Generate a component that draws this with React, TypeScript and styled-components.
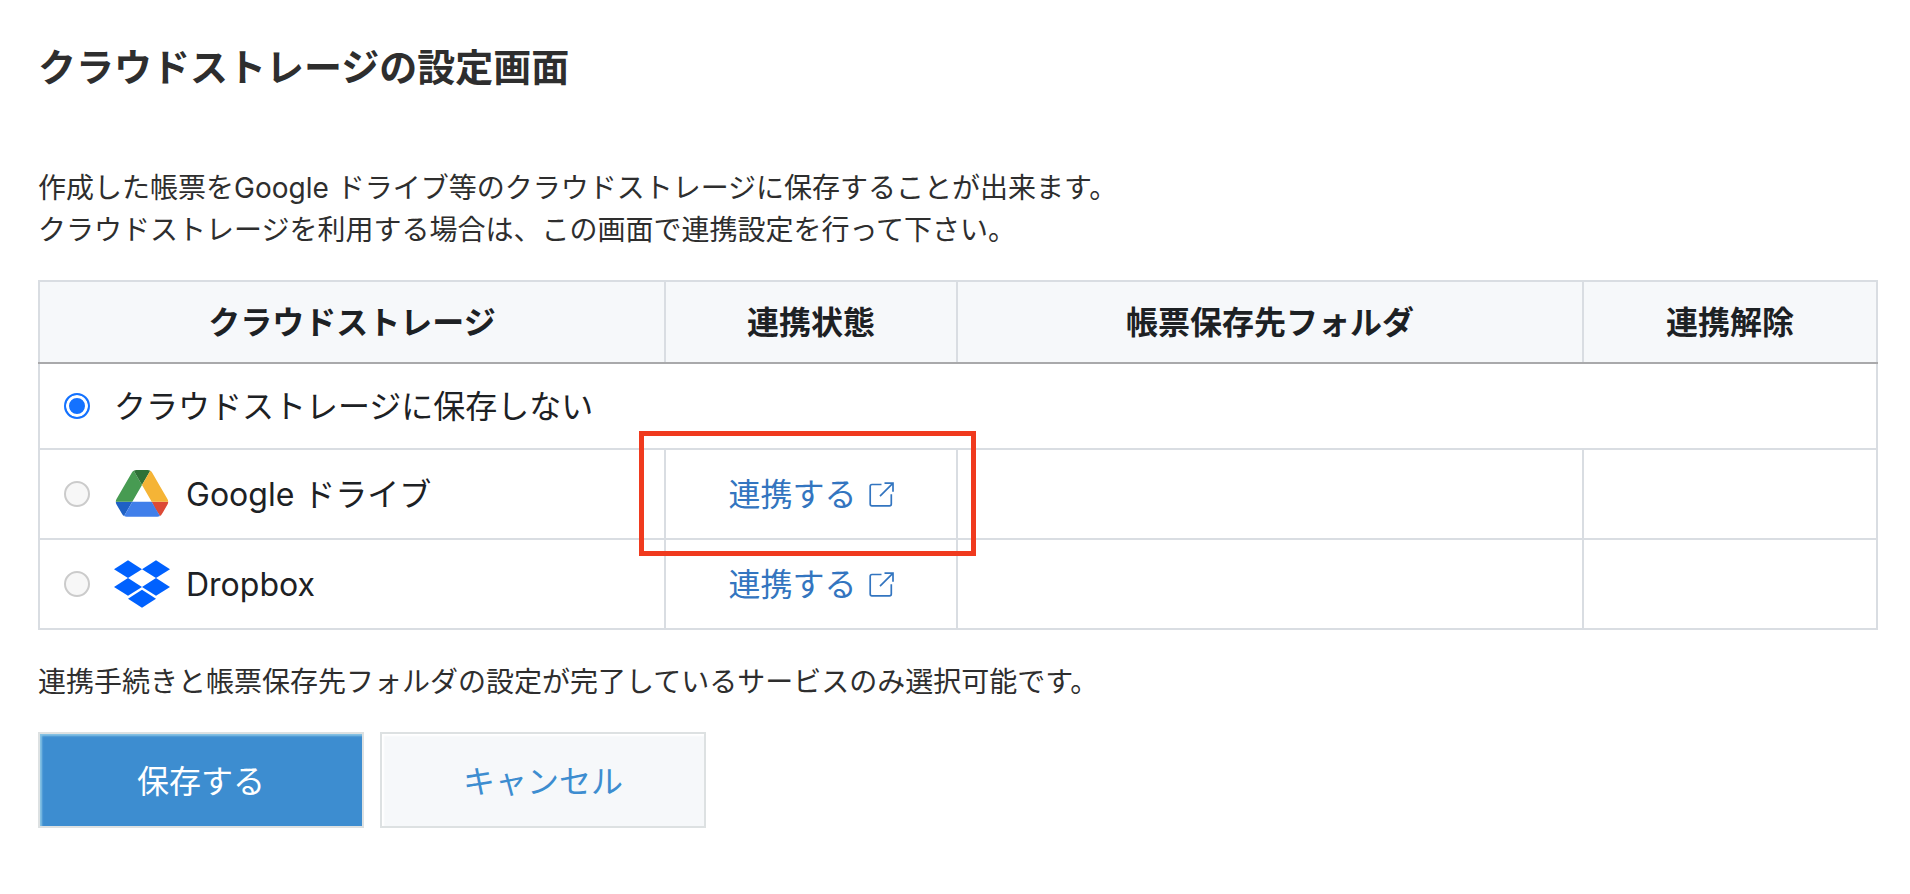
import React from "react";
import styled, { createGlobalStyle } from "styled-components";

const line = "#d9dde2";

const GlobalStyle = createGlobalStyle`
  *, *::before, *::after { box-sizing: border-box; }
  body {
    margin: 0;
    background: #fff;
    color: #2e2e2e;
    font-family: "Noto Sans", "Noto Sans CJK JP", sans-serif;
    font-size: 28px;
    line-height: 42px;
  }
`;

const Page = styled.main`
  padding: 38px 32px 38px 38px;
`;

const Title = styled.h1`
  margin: 0 0 72px;
  font-size: 38px;
  line-height: 56px;
  font-weight: 700;
`;

const Paragraph = styled.p`
  margin: 0;
`;

const Brand = styled.span`
  font-family: Inter, "Noto Sans CJK JP", sans-serif;
  line-height: 1;
  white-space: pre;
`;

const Table = styled.table`
  width: 100%;
  margin: 30px 0;
  table-layout: fixed;
  border-collapse: collapse;
  border: 2px solid ${line};
  color: #1d2124;
  font-size: 32px;
  line-height: 48px;
`;

const Column = styled.col<{ $width?: string }>`
  width: ${(p) => p.$width ?? "auto"};
`;

const HeadCell = styled.th`
  height: 82px;
  padding: 0;
  background: #f6f8fa;
  border-right: 2px solid ${line};
  border-bottom: 2px solid #a9a9ab;
  font-weight: 700;
`;

const Row = styled.tr<{ $height: number }>`
  height: ${(p) => p.$height}px;
`;

const Cell = styled.td`
  position: relative;
  padding: 0 24px;
  border: 2px solid ${line};
  text-align: center;
`;

const Choice = styled.label`
  display: flex;
  align-items: center;
  gap: 24px;
`;

const Service = styled.span`
  display: flex;
  align-items: center;
  gap: 16px;
`;

const Radio = styled.input.attrs({ type: "radio" })`
  appearance: none;
  flex: none;
  width: 26px;
  height: 26px;
  margin: 0;
  border: 2px solid #cbcbcb;
  border-radius: 50%;
  background: #f7f7f7;

  &:checked {
    border-color: #1472ff;
    background: #1472ff;
    box-shadow: inset 0 0 0 3px #fff;
  }
`;

const ConnectLink = styled.a`
  display: inline-flex;
  align-items: center;
  gap: 12px;
  color: #3375c0;
  text-decoration: none;
`;

const Highlight = styled.span`
  position: absolute;
  inset: -19px -20px -18px -27px;
  z-index: 1;
  border: 5px solid #f03a1e;
  pointer-events: none;
`;

const Actions = styled.div`
  display: flex;
  gap: 16px;
  margin-top: 30px;
`;

const Button = styled.button<{ $primary?: boolean }>`
  width: 326px;
  height: 96px;
  padding: 2px 0 0;
  border: 2px solid #dde1e2;
  background: ${(p) => (p.$primary ? "#3d8dd0" : "#f6f8fa")};
  color: ${(p) => (p.$primary ? "#fff" : "#3d8dd0")};
  box-shadow: inset 2px 2px 2px ${(p) => (p.$primary ? "#86c3e4" : "#fff")};
  font-family: inherit;
  font-size: 32px;
  line-height: 48px;
`;

const DriveLogo = () => (
  <svg width="56" height="48" viewBox="-3 0 93.3 80" aria-hidden="true">
    <path fill="#1f60c4" d="m6.6 66.85 3.85 6.65c.8 1.4 1.95 2.5 3.3 3.3l13.75-23.8h-27.5c0 1.55.4 3.1 1.2 4.5z" />
    <path fill="#479b52" d="m43.65 25-13.75-23.8c-1.35.8-2.5 1.9-3.3 3.3l-25.4 44a9.06 9.06 0 0 0 -1.2 4.5h27.5z" />
    <path fill="#dc4a36" d="m73.55 76.8c1.35-.8 2.5-1.9 3.3-3.3l1.6-2.75 7.65-13.25c.8-1.4 1.2-2.95 1.2-4.5h-27.5l5.85 11.5z" />
    <path fill="#2f7137" d="m43.65 25 13.75-23.8c-1.35-.8-2.9-1.2-4.5-1.2h-18.5c-1.6 0-3.15.45-4.5 1.2z" />
    <path fill="#407fea" d="m59.8 53h-32.3l-13.75 23.8c1.35.8 2.9 1.2 4.5 1.2h50.8c1.6 0 3.15-.45 4.5-1.2z" />
    <path fill="#f5b436" d="m73.4 26.5-12.7-22c-.8-1.4-1.95-2.5-3.3-3.3l-13.75 23.8 16.15 28h27.45c0-1.55-.4-3.1-1.2-4.5z" />
  </svg>
);

const DropboxLogo = () => (
  <svg width="56" height="48" viewBox="0 0 168 144" fill="#0061fe" aria-hidden="true">
    <path d="M42 1 84 28 42 54 0 28Z" />
    <path d="M126 1 168 28 126 54 84 28Z" />
    <path d="M42 54 84 81 42 107 0 81Z" />
    <path d="M126 54 168 81 126 107 84 81Z" />
    <path d="M84 89 126 116 84 143 42 116Z" />
  </svg>
);

const ExternalIcon = () => (
  <svg width="25" height="25" viewBox="0 0 25 25" fill="none" stroke="currentColor" strokeWidth="1.7" aria-hidden="true">
    <path d="M12.5 2.5H3Q1.2 2.5 1.2 4.3V22Q1.2 23.8 3 23.8H20.5Q22.3 23.8 22.3 22V12.3" />
    <path d="M15.5 1.2H24V9.8M23.8 1.4 11 14.2" />
  </svg>
);

const services = [
  { id: "google", brand: "Google ", suffix: "ドライブ", Logo: DriveLogo, highlighted: true },
  { id: "dropbox", brand: "Dropbox", suffix: "", Logo: DropboxLogo, highlighted: false },
];

export default function App() {
  return (
    <>
      <GlobalStyle />
      <Page lang="ja">
        <Title>クラウドストレージの設定画面</Title>
        <Paragraph>
          作成した帳票を<Brand>{"Google "}</Brand>ドライブ等のクラウドストレージに保存することが出来ます。
          <br />
          クラウドストレージを利用する場合は、この画面で連携設定を行って下さい。
        </Paragraph>
        <Table>
          <colgroup>
            <Column />
            <Column $width="292px" />
            <Column />
            <Column $width="294px" />
          </colgroup>
          <thead>
            <tr>
              <HeadCell scope="col">クラウドストレージ</HeadCell>
              <HeadCell scope="col">連携状態</HeadCell>
              <HeadCell scope="col">帳票保存先フォルダ</HeadCell>
              <HeadCell scope="col">連携解除</HeadCell>
            </tr>
          </thead>
          <tbody>
            <Row $height={86}>
              <Cell colSpan={4}>
                <Choice>
                  <Radio name="storage" value="none" defaultChecked />
                  クラウドストレージに保存しない
                </Choice>
              </Cell>
            </Row>
            {services.map(({ id, brand, suffix, Logo, highlighted }) => (
              <Row key={id} $height={90}>
                <Cell>
                  <Choice>
                    <Radio name="storage" value={id} disabled />
                    <Service>
                      <Logo />
                      <span>
                        <Brand>{brand}</Brand>
                        {suffix}
                      </span>
                    </Service>
                  </Choice>
                </Cell>
                <Cell>
                  <ConnectLink href={`#${id}`}>
                    連携する
                    <ExternalIcon />
                  </ConnectLink>
                  {highlighted && <Highlight />}
                </Cell>
                <Cell />
                <Cell />
              </Row>
            ))}
          </tbody>
        </Table>
        <Paragraph>連携手続きと帳票保存先フォルダの設定が完了しているサービスのみ選択可能です。</Paragraph>
        <Actions>
          <Button type="button" $primary>
            保存する
          </Button>
          <Button type="button">キャンセル</Button>
        </Actions>
      </Page>
    </>
  );
}
